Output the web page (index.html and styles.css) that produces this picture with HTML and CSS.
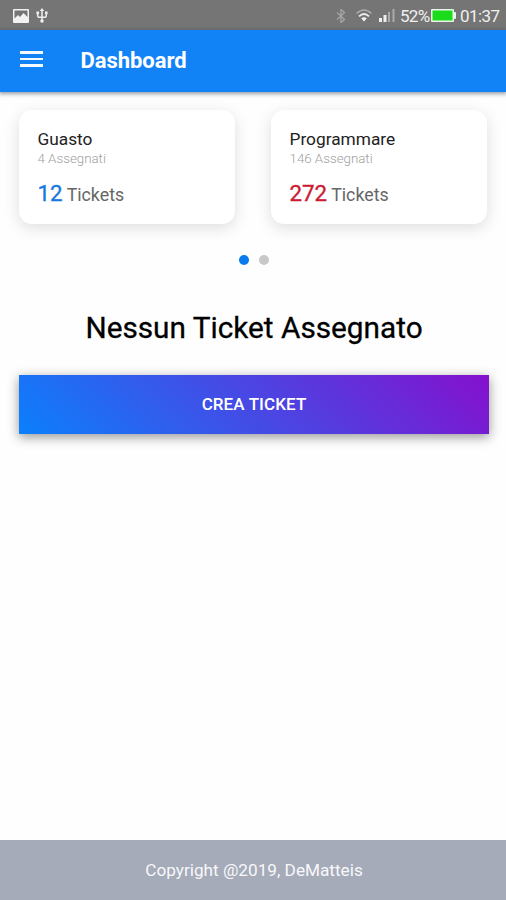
FILE: index.html
```html
<!DOCTYPE html>
<html lang="it">
<head>
<meta charset="utf-8">
<title>Dashboard</title>
<link rel="stylesheet" href="styles.css">
</head>
<body>
<div class="status">
  <svg class="ic-photo" width="16" height="14" viewBox="0 0 16 14"><path fill="#f2f2f2" fill-rule="evenodd" d="M1 0h14q1 0 1 1v12q0 1-1 1H1q-1 0-1-1V1q0-1 1-1zM1.500 1.500v8l3.500-3.500 2 2 3.500-4 4 4V1.500z"/></svg>
  <svg class="ic-usb" width="12" height="15" viewBox="0 0 12 15" fill="none" stroke="#eee" stroke-width="1.500"><path d="M6 2v11M1.700 5v3q0 1.200 1.200 1.200h6.200q1.200 0 1.200-1.200V5"/><path fill="#eee" stroke="none" d="M6 0l2.300 3H3.700zM.4 3.500h2.700v2.500H.4zM9 3.500h2.600v2.500H9z"/><circle cx="6" cy="13" r="1.800" fill="#eee" stroke="none"/></svg>
  <span class="spacer"></span>
  <svg class="ic-bt" width="10" height="14" viewBox="0 0 10 14" fill="none" stroke="#a3a3a3" stroke-width="1.400"><path d="M1 3.500l7.500 7L5 13.500V.5l3.500 3-7.500 7"/></svg>
  <svg class="ic-wifi" width="16" height="13" viewBox="0 0 16 13" fill="none"><path stroke="#aaa" stroke-width="1.600" d="M.6 4.500Q8-2.500 15.400 4.500"/><path stroke="#eee" stroke-width="1.800" d="M3 7.300q5-4.500 10 0"/><path fill="#f2f2f2" d="M5.200 9.300q2.800-2.300 5.600 0L8 12.500z"/></svg>
  <svg class="ic-signal" width="16" height="13" viewBox="0 0 16 13"><path fill="#eee" d="M0 9h3v4H0zM4.500 6h3v7h-3z"/><path fill="#aaa" d="M9 3h2v10H9zM13.500 0h2v13h-2z"/></svg>
  <span class="pct">52%</span>
  <svg class="ic-battery" width="25" height="13" viewBox="0 0 25 13"><path fill="#e8f5e8" d="M1 0h21q1 0 1 1v2h1q1 0 1 1v5q0 1-1 1h-1v2q0 1-1 1H1q-1 0-1-1V1q0-1 1-1z"/><path fill="#1bdc1b" d="M1.500 1.500h20v10h-20z"/></svg>
  <span class="clock">01:37</span>
</div>
<header class="bar">
  <div class="menu"><i></i><i></i><i></i></div>
  <h1>Dashboard</h1>
</header>
<main>
  <section class="cards">
    <article class="card"><h2>Guasto</h2><p class="sub">4 Assegnati</p><p class="count"><b class="blue">12</b> Tickets</p></article>
    <article class="card"><h2>Programmare</h2><p class="sub">146 Assegnati</p><p class="count"><b class="red">272</b> Tickets</p></article>
  </section>
  <div class="dots"><i class="on"></i><i></i></div>
  <h3>Nessun Ticket Assegnato</h3>
  <button class="create">CREA TICKET</button>
</main>
<footer>Copyright @2019, DeMatteis</footer>
</body>
</html>
```
FILE: styles.css
```css
* { box-sizing: border-box; margin: 0; padding: 0; }
body { width: 506px; height: 900px; display: flex; flex-direction: column; overflow: hidden; background: #fefefe; font-family: Roboto, sans-serif; color: #000; }
svg { display: block; flex: none; }
.status { height: 30px; flex: none; display: flex; align-items: center; padding: 1px 7px 0 13px; background: #757575; color: #f0f0f0; font-size: 17px; line-height: 30px; }
.ic-usb { margin-left: 7px; }
.spacer { flex: 1; }
.ic-wifi { margin-left: 10px; }
.ic-signal { margin-left: 7px; }
.pct { width: 30px; margin-left: 5px; letter-spacing: -.7px; white-space: nowrap; }
.ic-battery { margin-left: 1px; }
.clock { width: 39px; margin-left: 4px; letter-spacing: -.6px; white-space: nowrap; }
.bar { position: relative; height: 61.500px; flex: none; display: flex; padding: 0 20px; background: #1283f7; box-shadow: 0 1px 4px 1px rgba(50, 70, 80, .5); }
.menu { width: 23px; height: 16px; margin-top: 21px; display: flex; flex-direction: column; justify-content: space-between; }
.menu i { height: 2.600px; background: #f4faff; }
h1 { margin-left: 37.500px; color: #fff; font-size: 22px; font-weight: 700; line-height: 61px; letter-spacing: -.05px; }
main { flex: 1; padding: 18.500px 17px 0 19px; }
.cards { display: grid; grid-template-columns: 216px 216px; gap: 36px; }
.card { height: 114px; padding: 19px 18.500px; border-radius: 13px; background: #fff; box-shadow: 0 4px 16px rgba(0, 0, 0, .13); }
h2 { font-size: 17.300px; font-weight: 400; line-height: 21px; color: #222; }
.sub { font-size: 13.300px; font-weight: 300; line-height: 17px; color: #a0a0a0; }
.count { margin-top: 10px; font-size: 17.800px; line-height: 32px; color: #666; white-space: nowrap; }
.count b { font-size: 22.300px; font-weight: 400; -webkit-text-stroke: .35px currentColor; }
.blue { color: #1677df; }
.red { color: #ca1c32; }
.dots { height: 10px; margin-top: 31px; display: flex; justify-content: center; gap: 10px; }
.dots i { width: 10px; height: 10px; border-radius: 50%; background: #c8c8c8; }
.dots .on { background: #087bed; }
h3 { margin-top: 42px; font-size: 29.750px; font-weight: 400; -webkit-text-stroke: .3px #000; line-height: 42px; text-align: center; white-space: nowrap; }
.create { display: block; width: 470px; height: 59px; margin-top: 26px; border: 0; background: linear-gradient(45deg, #0b80fb, #8510cd); color: #fff; font: 500 17px/59px Roboto, sans-serif; letter-spacing: .1px; box-shadow: 0 3px 11px rgba(0, 0, 0, .42); }
footer { height: 60px; flex: none; padding-left: 2px; background: #a5abb8; color: #f8f8fb; font-size: 17.200px; line-height: 61px; text-align: center; }
```
